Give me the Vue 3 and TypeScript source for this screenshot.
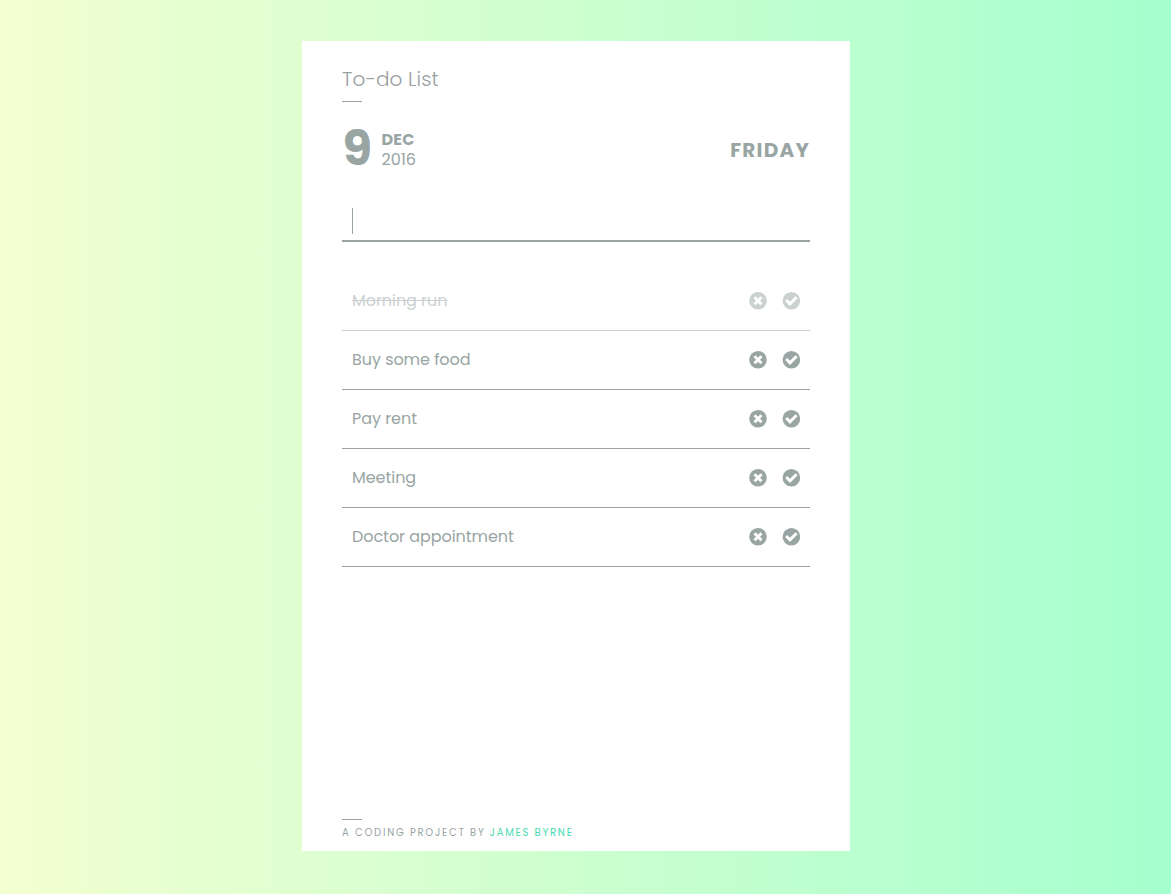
<script setup lang="ts">
import { ref } from 'vue'

interface Task { label: string; done: boolean }

const tasks = ref<Task[]>([
  { label: 'Morning run', done: true },
  { label: 'Buy some food', done: false },
  { label: 'Pay rent', done: false },
  { label: 'Meeting', done: false },
  { label: 'Doctor appointment', done: false },
])
const draft = ref('')

function add() {
  const label = draft.value.trim()
  if (label) tasks.value.push({ label, done: false })
  draft.value = ''
}
function remove(index: number) {
  tasks.value.splice(index, 1)
}
</script>

<template>
  <div class="page">
    <main class="card">
      <h1 class="title">To-do List</h1>
      <div class="rule"></div>
      <header class="date">
        <span class="day">9</span>
        <div class="month-year">
          <span class="month">DEC</span>
          <span class="year">2016</span>
        </div>
        <span class="weekday">FRIDAY</span>
      </header>
      <form class="entry" @submit.prevent="add">
        <span v-if="!draft" class="caret"></span>
        <input v-model="draft" class="field" aria-label="New task" />
      </form>
      <ul class="tasks">
        <li v-for="(task, i) in tasks" :key="i" class="task" :class="{ done: task.done }">
          <span class="label">{{ task.label }}</span>
          <button class="icon" aria-label="Remove" @click="remove(i)">
            <svg viewBox="0 0 18 18" width="18" height="18">
              <circle cx="9" cy="8.8" r="8.8" fill="currentColor" />
              <path d="M5.5 5.3L12.5 12.3M12.5 5.3L5.5 12.3" stroke="#fff" stroke-width="3" />
            </svg>
          </button>
          <button class="icon" aria-label="Complete" @click="task.done = !task.done">
            <svg viewBox="0 0 18 18" width="18" height="18">
              <circle cx="9.4" cy="8.8" r="8.8" fill="currentColor" />
              <path d="M4.2 8L8 11.8L14.6 5.2" fill="none" stroke="#fff" stroke-width="3" />
            </svg>
          </button>
        </li>
      </ul>
      <footer class="footer">
        <div class="rule"></div>
        <p class="credit"><span class="by">A CODING PROJECT BY</span><a class="author">JAMES BYRNE</a></p>
      </footer>
    </main>
  </div>
</template>

<style>
body { margin: 0; }
</style>

<style scoped>
.page {
  box-sizing: border-box;
  height: 894px;
  padding-top: 41px;
  padding-left: 302px;
  background: linear-gradient(to right, #f3ffd1, #a5ffce);
  font-family: Poppins, Inter, "Liberation Sans", sans-serif;
  color: #98a5a3;
}
.card {
  box-sizing: border-box;
  display: flex;
  flex-direction: column;
  width: 548px;
  height: 810px;
  padding: 23px 40px 9px;
  background: #fff;
}
.title {
  margin: 0;
  font-size: 20px;
  line-height: 30px;
  font-weight: 300;
  letter-spacing: 0.1px;
  color: #98a09f;
}
.rule { width: 20px; height: 1px; margin-top: 7px; background: #98a3a2; }
.date { display: flex; align-items: center; height: 50px; margin-top: 22px; }
.day {
  box-sizing: border-box;
  width: 39.5px;
  padding-left: 0.5px;
  font-size: 48px;
  line-height: 48px;
  font-weight: 700;
}
.month-year { display: flex; flex-direction: column; padding-top: 2px; font-size: 16px; line-height: 20px; }
.month { font-weight: 700; letter-spacing: 0.2px; }
.weekday { margin-left: auto; padding-top: 2px; font-size: 20px; font-weight: 700; letter-spacing: 1.2px; }
.entry {
  display: flex;
  align-items: center;
  box-sizing: border-box;
  height: 40px;
  margin-top: 28px;
  padding-left: 10px;
  border-bottom: 2px solid #98a3a2;
}
.caret { width: 1px; height: 26px; background: #98a5a3; }
.field { flex: 1; min-width: 0; padding: 0; border: 0; outline: 0; background: none; font: inherit; color: inherit; }
.tasks { margin: 30px 0 0; padding: 0; list-style: none; }
.task {
  box-sizing: border-box;
  display: flex;
  align-items: center;
  height: 59px;
  padding: 0 10px;
  border-bottom: 1px solid #98a3a2;
  font-size: 16px;
}
.done { opacity: 0.5; }
.done .label { text-decoration: line-through; }
.label { flex: 1; padding-bottom: 2px; letter-spacing: -0.05px; }
.icon { display: flex; margin-left: 15px; padding: 0; border: 0; background: none; color: #98a5a3; cursor: pointer; }
.icon svg { overflow: visible; }
.footer { margin-top: auto; }
.credit { margin: 4px 0 0; font-size: 10px; line-height: 18px; letter-spacing: 1.77px; white-space: nowrap; }
.by { margin-right: 4px; }
.author { color: #48dbb0; }
</style>
